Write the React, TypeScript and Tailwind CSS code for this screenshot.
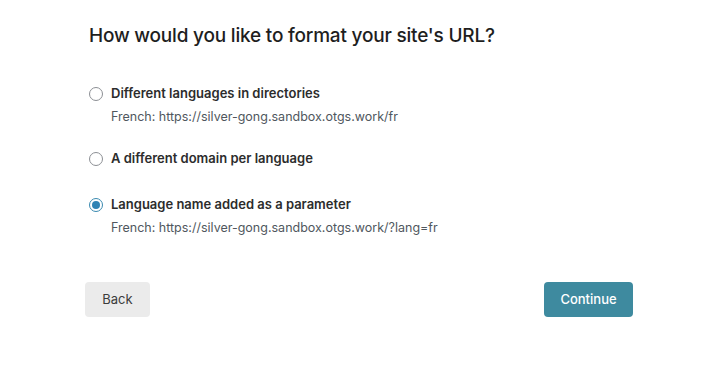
import { useState } from "react";

const options = [
  {
    id: "dir",
    label: "Different languages in directories",
    example: "French: https://silver-gong.sandbox.otgs.work/fr",
  },
  {
    id: "domain",
    label: "A different domain per language",
    example: "",
  },
  {
    id: "param",
    label: "Language name added as a parameter",
    example: "French: https://silver-gong.sandbox.otgs.work/?lang=fr",
  },
];

export default function App() {
  const [selected, setSelected] = useState("param");

  return (
    <div
      className="w-[719px] h-[365px] bg-white text-[#1e1e1e]"
      style={{ fontFamily: "Inter, 'Noto Sans', sans-serif" }}
    >
      <div className="pl-[85px] pr-[86px] pt-[24px]">
        <h1 className="pl-[4px] text-[19px] leading-[24px] font-medium tracking-[-0.2px] text-[#1e1e1e]">
          How would you like to format your site's URL?
        </h1>

        <div className="pl-[4px] mt-[36px] flex flex-col gap-[26px]">
          {options.map((o) => {
            const on = selected === o.id;
            return (
              <label key={o.id} className="flex flex-col cursor-pointer">
                <span className="flex items-center gap-[8px] h-[20px]">
                  <input
                    type="radio"
                    name="url-format"
                    className="sr-only"
                    checked={on}
                    onChange={() => setSelected(o.id)}
                  />
                  <span
                    className={`w-[14px] h-[14px] rounded-full border flex items-center justify-center bg-white ${
                      on ? "border-[#3a8ab0]" : "border-[#8c8f94]"
                    }`}
                  >
                    {on && <span className="w-[8px] h-[8px] rounded-full bg-[#2f83b4]" />}
                  </span>
                  <span className="text-[13px] font-semibold text-[#2c2c2c]">{o.label}</span>
                </span>
                {o.example && (
                  <span className="pl-[22px] mt-[7px] text-[12.5px] leading-[12px] text-[#50575e]">
                    {o.example}
                  </span>
                )}
              </label>
            );
          })}
        </div>

        <div className="mt-[48px] flex justify-between">
          <button className="w-[65px] h-[35px] rounded-[4px] bg-[#ebebeb] text-[13px] text-[#3c3c3c]">
            Back
          </button>
          <button className="w-[89px] h-[35px] rounded-[4px] bg-[#3e8a9f] text-[13px] font-medium text-white">
            Continue
          </button>
        </div>
      </div>
    </div>
  );
}
